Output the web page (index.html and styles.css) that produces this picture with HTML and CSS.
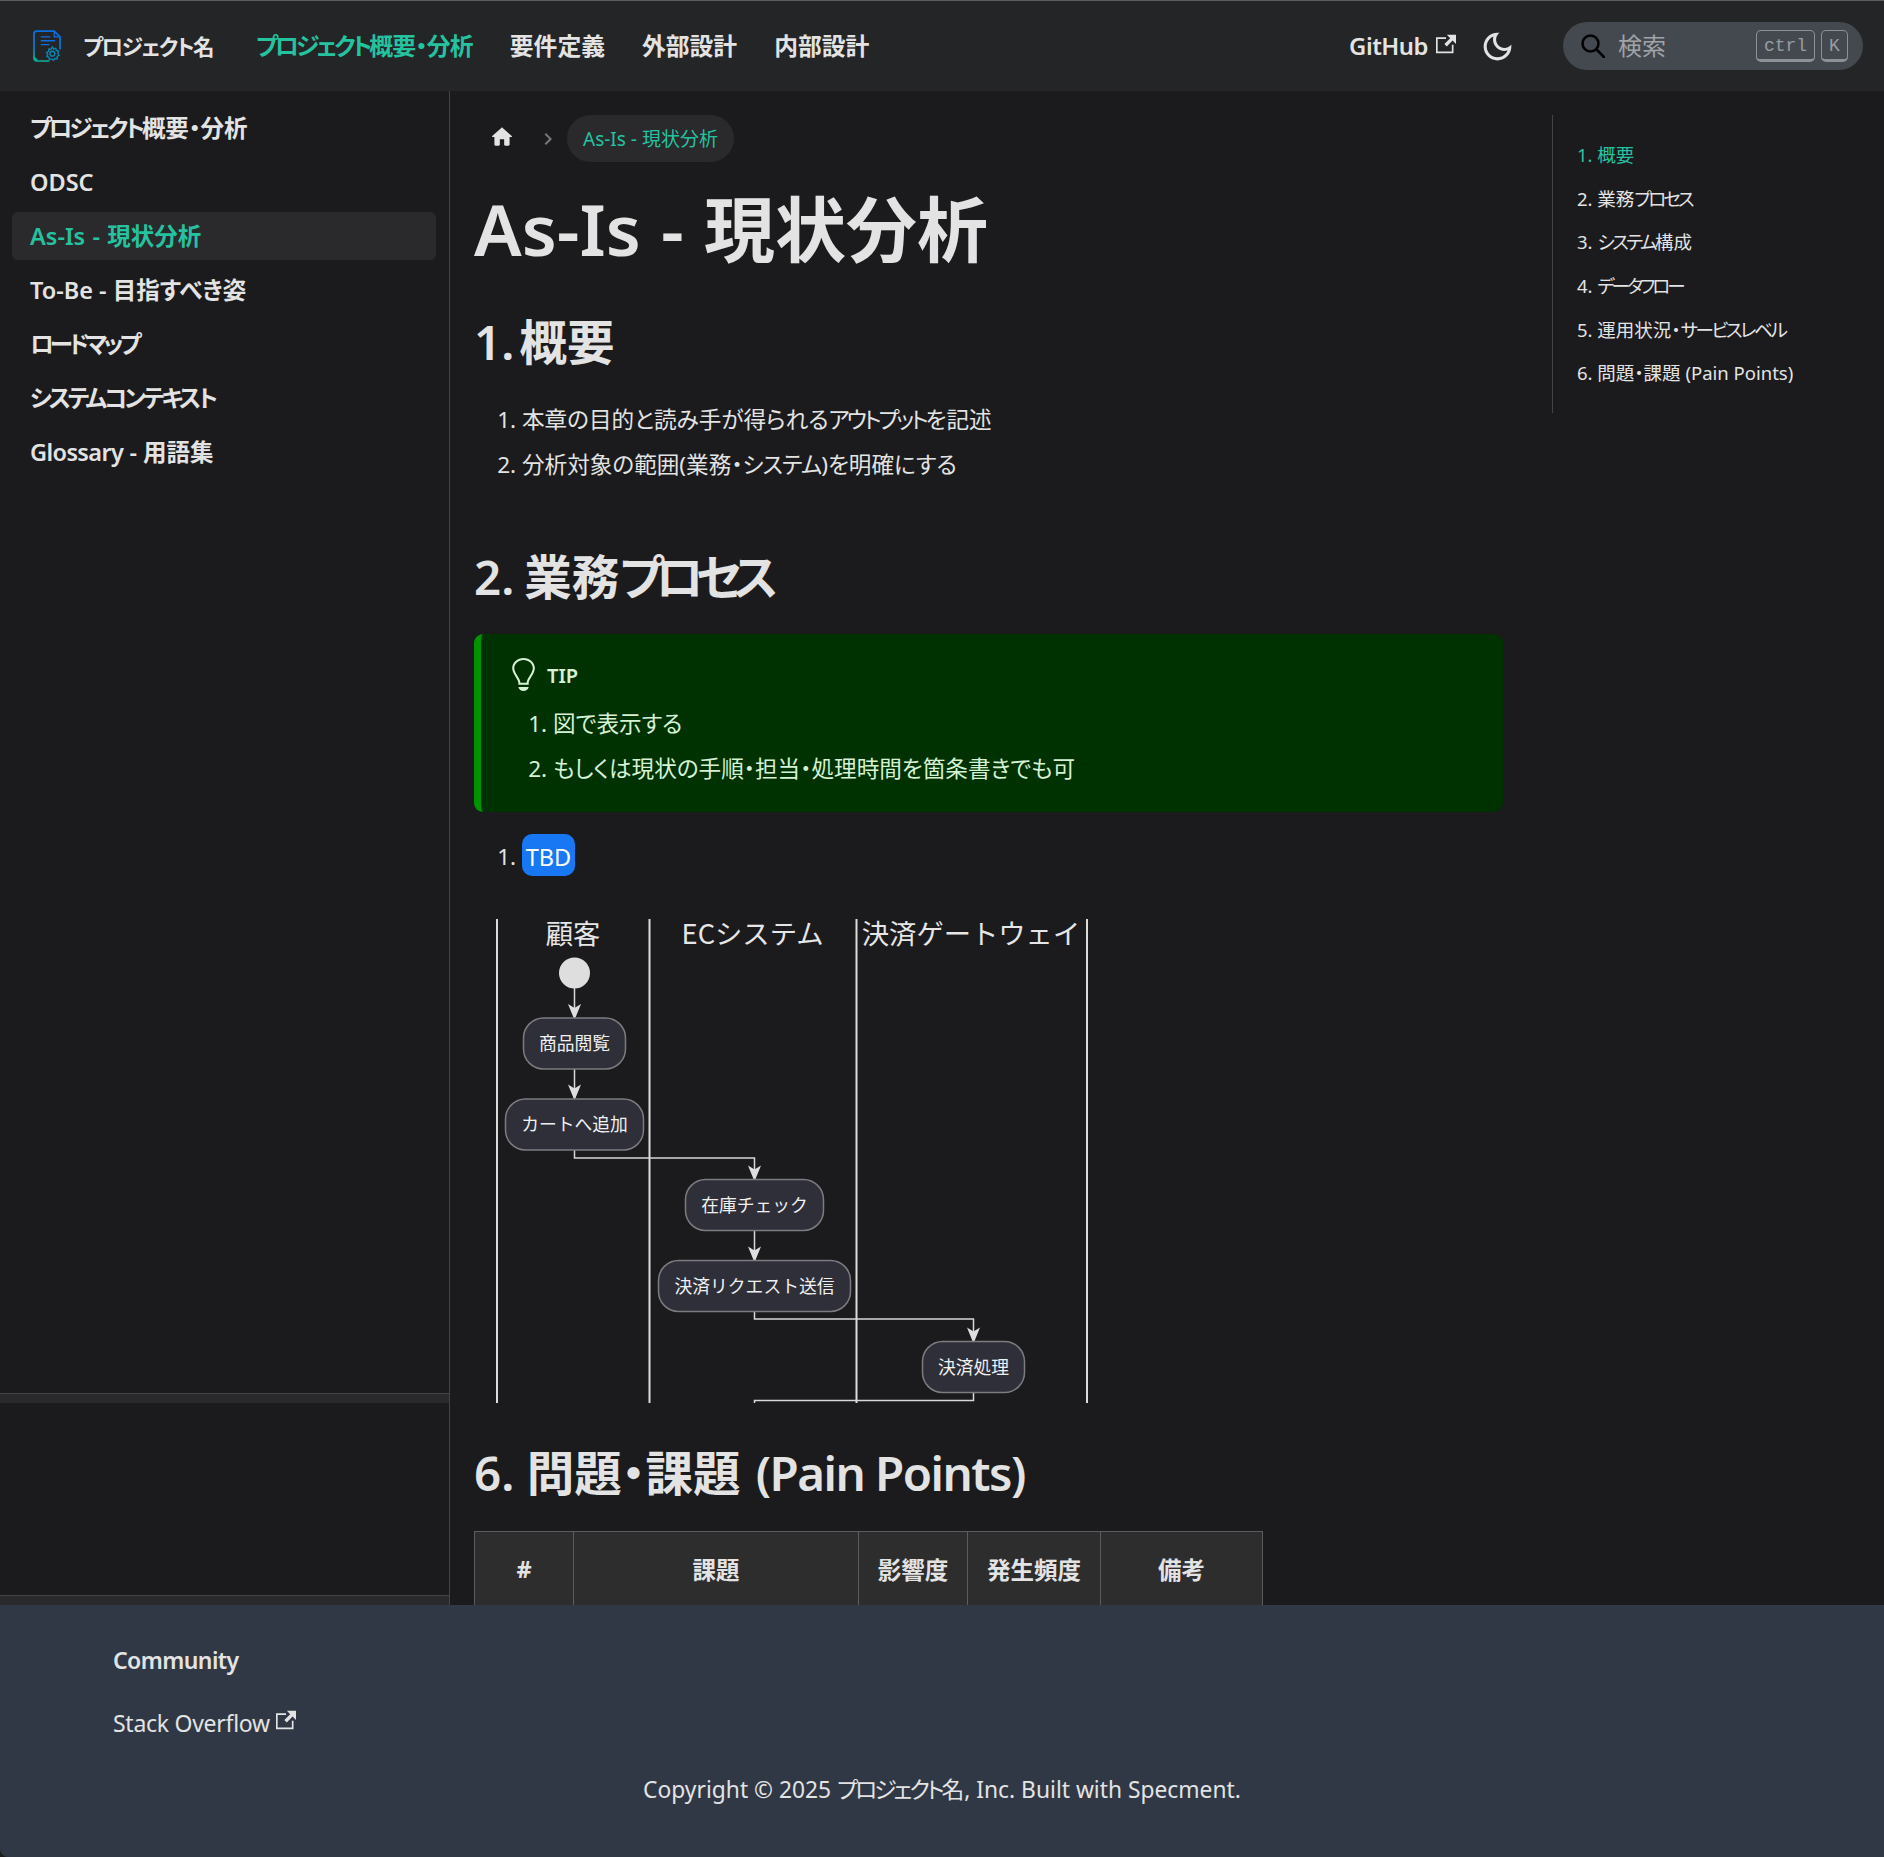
FILE: index.html
```html
<!DOCTYPE html>
<html lang="ja">
<head>
<meta charset="utf-8">
<title>As-Is - 現状分析</title>
<link rel="stylesheet" href="styles.css">
</head>
<body>
<div class="app">
  <header class="navbar">
    <a class="brand">
      <svg class="logo" viewBox="0 0 30 34" fill="none">
        <defs><linearGradient id="lg" x1="0" y1="0" x2="0" y2="1"><stop offset="0" stop-color="#0a6fe0"/><stop offset=".55" stop-color="#0a78c8"/><stop offset="1" stop-color="#0fb09a"/></linearGradient></defs>
        <path d="M17 32H4a3 3 0 0 1-3-3V4a3 3 0 0 1 3-3h18l6 6v13" stroke="url(#lg)" stroke-width="1.8"/>
        <path d="M1.500 27.500a3 3 0 0 0 3 3" stroke="#0fb09a" stroke-width="1.600"/>
        <path d="M22 1.500V7h6" stroke="#0a6fe0" stroke-width="1.400"/>
        <path d="M8 7h10M8 11h15M8 15h9" stroke="#0a6fe0" stroke-width="1.400"/>
        <path d="M20 17.500l1.300 2 2.300-.7.6 2.300 2.300.8-.8 2.200 1.400 1.900-2 1.200-.1 2.400-2.400-.2-1.400 1.900-1.900-1.400-2.300.7-.5-2.400-2.200-1 1-2.100-1.200-2 2.100-1.100.2-2.400 2.400.3z" stroke="#0a86b8" stroke-width="1.400" fill="#242526"/>
        <circle cx="20" cy="24.400" r="2.500" stroke="#0a86b8" stroke-width="1.400"/>
      </svg>
      <b class="brand-title"><span class="kb">プロジェクト</span>名</b>
    </a>
    <nav class="nav-links">
      <a class="nav-link is-active"><span class="kn">プロジェクト</span>概要・分析</a>
      <a class="nav-link">要件定義</a>
      <a class="nav-link">外部設計</a>
      <a class="nav-link">内部設計</a>
    </nav>
    <div class="nav-right">
      <a class="nav-link github">GitHub
        <svg class="ext" viewBox="0 0 24 24"><path fill="currentColor" d="M21 13v10h-21v-19h12v2h-10v15h17v-8h2zm3-12h-10.988l4.035 4-6.977 7.070 2.828 2.828 6.977-7.070 4.125 4.172v-11z"/></svg>
      </a>
      <svg class="moon" viewBox="0 0 24 24"><path fill="#e3e3e3" d="M9.370,5.510C9.190,6.150,9.100,6.820,9.100,7.500c0,4.080,3.320,7.400,7.400,7.400c0.680,0,1.350-0.090,1.990-0.270C17.450,17.190,14.930,19,12,19 c-3.860,0-7-3.140-7-7C5,9.070,6.810,6.550,9.370,5.510z M12,3c-4.970,0-9,4.030-9,9s4.030,9,9,9s9-4.030,9-9c0-0.460-0.040-0.920-0.100-1.360 c-0.980,1.370-2.580,2.260-4.400,2.260c-2.980,0-5.400-2.420-5.400-5.400c0-1.810,0.890-3.420,2.260-4.400C12.920,3.040,12.460,3,12,3L12,3z"/></svg>
      <div class="search">
        <svg class="search-icon" viewBox="0 0 24 24" fill="none" stroke="#000" stroke-width="2.600" stroke-linecap="round"><circle cx="9.500" cy="9.500" r="8"/><path d="M15.500 15.500L23 23"/></svg>
        <span class="search-text">検索</span>
        <kbd class="key key-ctrl">ctrl</kbd>
        <kbd class="key">K</kbd>
      </div>
    </div>
  </header>

  <div class="layout">
    <aside class="sidebar">
      <ul class="menu">
        <li class="menu-item"><span class="kn">プロジェクト</span>概要・分析</li>
        <li class="menu-item">ODSC</li>
        <li class="menu-item is-active">As-Is - 現状分析</li>
        <li class="menu-item">To-Be - 目指すべき姿</li>
        <li class="menu-item"><span class="kl">ロードマップ</span></li>
        <li class="menu-item"><span class="kn">システムコンテキスト</span></li>
        <li class="menu-item"><span class="lt">Glossary</span> - 用語集</li>
      </ul>
      <div class="side-bar"></div>
      <div class="side-panel"></div>
      <div class="side-bar"></div>
    </aside>

    <main class="doc">
      <div class="crumbs">
        <svg class="home" viewBox="0 0 24 24"><path fill="#e3e3e3" d="M10 19v-5h4v5c0 .55.45 1 1 1h3c.55 0 1-.45 1-1v-7h1.700c.46 0 .68-.57.33-.87L12.670 3.600c-.38-.34-.96-.34-1.340 0l-8.360 7.530c-.34.3-.13.87.33.87H5v7c0 .55.45 1 1 1h3c.55 0 1-.45 1-1z"/></svg>
        <svg class="chev" viewBox="0 0 24 24"><path fill="#777" d="M10 6 8.590 7.410 13.170 12l-4.580 4.590L10 18l6-6z"/></svg>
        <span class="crumb-pill">As-Is - 現状分析</span>
      </div>
      <h1 class="title">As-Is - 現状分析</h1>
      <h2 class="h2 h2-first">1. 概要</h2>
      <ol class="list list-first">
        <li>本章の目的と読み手が得られる<span class="kn">アウトプット</span>を記述</li>
        <li>分析対象の範囲(業務・<span class="ks">システム</span>)を明確にする</li>
      </ol>
      <h2 class="h2 h2-second">2. 業務<span class="kl">プロセス</span></h2>
      <div class="tip">
        <div class="tip-head">
          <svg class="bulb" viewBox="0 0 12 16"><path fill="#d5f2d5" d="M6.500 0C3.480 0 1 2.190 1 5c0 .92.55 2.250 1 3 1.340 2.250 1.780 2.780 2 4v1h5v-1c.22-1.220.66-1.750 2-4 .45-.75 1-2.080 1-3 0-2.810-2.480-5-5.500-5zm3.640 7.480c-.25.44-.47.8-.67 1.110-.86 1.410-1.250 2.060-1.450 3.230-.02.05-.02.11-.02.17H5c0-.06 0-.13-.02-.17-.2-1.170-.59-1.830-1.450-3.230-.2-.31-.42-.67-.67-1.110C2.440 6.780 2 5.650 2 5c0-2.200 2.020-4 4.500-4 1.220 0 2.360.42 3.220 1.190C10.550 2.940 11 3.940 11 5c0 .66-.44 1.780-.86 2.480zM4 14h5c-.23 1.140-1.300 2-2.500 2s-2.270-.86-2.500-2z"/></svg>
          <span class="tip-label">TIP</span>
        </div>
        <ol class="list tip-list">
          <li>図で表示する</li>
          <li>もしくは現状の手順・担当・処理時間を箇条書きでも可</li>
        </ol>
      </div>
      <ol class="list list-tbd">
        <li><span class="badge">TBD</span></li>
      </ol>
      <svg class="diagram" viewBox="474 905 640 498" width="640" height="498">
        <g class="lanes">
          <path d="M497 919V1403M649.500 919V1403M856.500 919V1403M1087 919V1403"/>
        </g>
        <text class="lane-title" x="573" y="944">顧客</text>
        <text class="lane-title" x="752.500" y="944">ECシステム</text>
        <text class="lane-title" x="971" y="944">決済ゲートウェイ</text>
        <circle class="start" cx="574.500" cy="973" r="15.500"/>
        <g class="edges">
          <path d="M574.500 988V1017"/>
          <path d="M574.500 1069V1098"/>
          <path d="M574.500 1150V1158H754.500V1179"/>
          <path d="M754.500 1231V1260"/>
          <path d="M754.500 1312V1319H973.500V1341"/>
          <path d="M973.500 1393V1400.500H754.500V1403"/>
        </g>
        <g class="heads">
          <path d="M574.500 1020l-6.500-16 6.500 4 6.500-4z"/>
          <path d="M574.500 1100.500l-6.500-16 6.500 4 6.500-4z"/>
          <path d="M754.500 1181.500l-6.500-16 6.500 4 6.500-4z"/>
          <path d="M754.500 1262.500l-6.500-16 6.500 4 6.500-4z"/>
          <path d="M973.500 1343.500l-6.500-16 6.500 4 6.500-4z"/>
        </g>
        <g class="nodes">
          <rect x="523.500" y="1018" width="102" height="51" rx="20"/>
          <rect x="505.500" y="1099" width="138" height="51" rx="20"/>
          <rect x="685.500" y="1179.500" width="138" height="51" rx="20"/>
          <rect x="658.500" y="1260.500" width="192" height="51" rx="20"/>
          <rect x="922.500" y="1341.500" width="102" height="51" rx="20"/>
        </g>
        <g class="node-text">
          <text x="574.500" y="1050">商品閲覧</text>
          <text x="574.500" y="1131">カートへ追加</text>
          <text x="754.500" y="1211.500">在庫チェック</text>
          <text x="754.500" y="1292.500">決済リクエスト送信</text>
          <text x="973.500" y="1373.500">決済処理</text>
        </g>
      </svg>
      <h2 class="h2 h2-third">6. 問題・課題 <span class="lp">(Pain Points)</span></h2>
      <table class="table">
        <thead>
          <tr><th class="c1">#</th><th class="c2">課題</th><th class="c3">影響度</th><th class="c4">発生頻度</th><th class="c5">備考</th></tr>
        </thead>
      </table>
    </main>

    <nav class="toc">
      <ul class="toc-list">
        <li class="is-active">1. 概要</li>
        <li>2. 業務<span class="kl">プロセス</span></li>
        <li>3. <span class="kn">システム</span>構成</li>
        <li>4. <span class="kl">データフロー</span></li>
        <li>5. 運用状況・<span class="kn">サービスレベル</span></li>
        <li>6. 問題・課題 (Pain Points)</li>
      </ul>
    </nav>
  </div>

  <footer class="footer">
    <div class="foot-title">Community</div>
    <a class="foot-link">Stack Overflow
      <svg class="ext ext-foot" viewBox="0 0 24 24"><path fill="currentColor" d="M21 13v10h-21v-19h12v2h-10v15h17v-8h2zm3-12h-10.988l4.035 4-6.977 7.070 2.828 2.828 6.977-7.070 4.125 4.172v-11z"/></svg>
    </a>
    <div class="copyright">Copyright © 2025 <span class="kn">プロジェクト</span>名, Inc. Built with Specment.</div>
  </footer>
</div>
</body>
</html>
```
FILE: styles.css
```css
* { box-sizing: border-box; }
html, body { margin: 0; padding: 0; background: #1b1b1d; }
body {
  font-family: "Noto Sans", "Noto Sans CJK JP", sans-serif;
  font-feature-settings: "palt";
  color: #e3e3e3;
  font-size: 22px;
}
.app { height: 1857px; display: flex; flex-direction: column; overflow: hidden; }
.kn { letter-spacing: -.13em; }
.kb { letter-spacing: -.07em; }
.kl { letter-spacing: -.165em; }
.ks { letter-spacing: -.04em; }
.lt { letter-spacing: -.026em; }
.lp { letter-spacing: -.032em; margin-left: 3px; }

/* navbar */
.navbar {
  height: 91px; flex: none; display: flex; align-items: center;
  background: #242526; border-top: 1px solid #5c5c5c; padding: 0 21px 0 33px;
}
.brand { display: flex; align-items: center; }
.logo { width: 29px; height: 33px; margin-right: 21px; }
.brand-title { font-size: 21.500px; font-weight: 600; width: 173px; margin-top: -2px; }
.nav-links { display: flex; gap: 37px; }
.nav-link { font-size: 23.800px; font-weight: 600; color: #e3e3e3; line-height: 32px; white-space: nowrap; }
.nav-link.is-active { color: #25c2a0; letter-spacing: -.03em; }
.nav-right { margin-left: auto; display: flex; align-items: center; }
.github { display: flex; align-items: center; gap: 8px; letter-spacing: -.02em; }
.ext { width: 20px; height: 20px; margin-top: -5px; }
.moon { width: 37px; height: 37px; margin-left: 23px; margin-right: 47px; }
.search {
  width: 300px; height: 48px; border-radius: 24px; background: #444950;
  display: flex; align-items: center; padding: 0 15px 0 18px;
}
.search-icon { width: 24px; height: 24px; flex: none; }
.search-text { font-size: 24px; color: #a0a3a8; margin-left: 13px; margin-right: auto; margin-top: -3px; }
.key {
  height: 32px; border: 1px solid #8d9096; border-bottom-width: 3px; border-radius: 5px;
  font-family: "Liberation Mono", monospace; font-size: 18px; color: #999ca1;
  display: flex; align-items: center; justify-content: center; width: 27px; padding-top: 2px;
}
.key-ctrl { width: 59px; margin-right: 6px; }

/* layout */
.layout { flex: 1; min-height: 0; display: flex; overflow: hidden; }
.sidebar { width: 450px; flex: none; border-right: 1px solid #444; display: flex; flex-direction: column; }
.menu { list-style: none; margin: 0; padding: 13px 13px 0 12px; flex: 1; }
.menu-item {
  height: 48px; line-height: 48px; padding-left: 18px; margin-bottom: 6px;
  font-size: 23.500px; font-weight: 600; border-radius: 6px;
}
.menu-item.is-active { background: #2a2a2c; color: #25c2a0; word-spacing: .05em; }
.side-bar { height: 10px; flex: none; background: #2a2a2c; border-top: 1px solid #444; }
.side-panel { height: 192px; flex: none; }

/* doc */
.doc { width: 1102px; flex: none; padding: 24px 49px 0 24px; overflow: hidden; }
.crumbs { display: flex; align-items: center; height: 47px; }
.home { width: 26px; height: 26px; margin-left: 15px; margin-top: -4px; flex: none; }
.chev { width: 24px; height: 24px; margin-left: 21px; margin-right: 7px; flex: none; }
.crumb-pill {
  height: 47px; line-height: 49px; padding: 0 16px; border-radius: 24px; background: #2a2a2c;
  color: #25c2a0; font-size: 19px;
}
.title { font-size: 71px; line-height: 84px; font-weight: 600; margin: 25px 0 0; word-spacing: .025em; }
.h2 { font-size: 47.500px; line-height: 56px; font-weight: 600; margin: 0; }
.h2-first { margin-top: 43px; word-spacing: -.15em; }
.h2-second { margin-top: 62px; word-spacing: -.05em; }
.h2-third { margin-top: 42px; }
.list { margin: 0; padding: 0 0 0 48px; }
.list li { line-height: 45px; font-size: 22.600px; }
.list-first { margin-top: 27px; }
.tip {
  margin-top: 29px; height: 178px; background: #003100; border-left: 7px solid #009400;
  border-radius: 9px; padding: 24px 0 0 29px; color: #d5f2d5;
}
.tip-head { display: flex; align-items: center; height: 33px; }
.bulb { width: 25px; height: 33px; }
.tip-label { font-size: 20px; font-weight: 600; margin-left: 12px; margin-top: 2px; }
.tip .tip-list { margin-top: 10px; padding-left: 43px; }
.list-tbd { margin-top: 22px; }
.list-tbd li { line-height: 46px; height: 42px; }
.badge {
  display: inline-block; height: 42px; line-height: 46px; width: 53px; text-align: center;
  background: #1877f2; color: #fff; border-radius: 10px; font-size: 23.500px; vertical-align: top;
}
.diagram { display: block; margin-top: 29px; overflow: hidden; font-family: "Noto Sans CJK JP", sans-serif; font-feature-settings: normal; }
.lanes path { stroke: #dcdcdc; stroke-width: 2; fill: none; }
.lane-title { font-size: 27.300px; fill: #e6e6e6; text-anchor: middle; }
.start { fill: #dedede; }
.edges path { stroke: #d8d8d8; stroke-width: 1.500; fill: none; }
.heads path { fill: #dedede; }
.nodes rect { fill: #2f2f39; stroke: #7c7c80; stroke-width: 1.500; }
.node-text text { font-size: 17.800px; fill: #f0f0f0; text-anchor: middle; }
.table { border-collapse: collapse; margin-top: 30px; table-layout: fixed; width: 788px; }
.table th {
  height: 78px; background: #2d2d2e; border: 1.500px solid #5c5c60; font-size: 23.500px; font-weight: 700; padding: 0 0 4px;
}
.c1 { width: 99px; } .c2 { width: 285px; } .c3 { width: 109px; } .c4 { width: 133px; } .c5 { width: 162px; }

/* toc */
.toc { flex: none; width: 332px; padding-top: 24px; }
.toc-list {
  list-style: none; margin: 0; height: 298px; border-left: 1px solid #444;
  padding: 18px 0 0 24px; font-size: 18.500px;
}
.toc-list li { height: 43.700px; line-height: 43.700px; white-space: nowrap; }
.toc-list .is-active { color: #25c2a0; letter-spacing: 0; }

/* footer */
.footer {
  height: 252px; flex: none; background: #303846; position: relative;
  padding: 36px 0 0 113px; border-bottom-left-radius: 8px;
}
.foot-title { font-size: 23px; font-weight: 600; line-height: 38px; letter-spacing: -.025em; }
.foot-link { display: flex; align-items: center; gap: 6px; margin-top: 25px; font-size: 23px; line-height: 38px; letter-spacing: -.012em; }
.ext-foot { width: 20px; height: 20px; margin-top: -6px; }
.copyright { margin-top: 29px; margin-left: -113px; text-align: center; font-size: 22.800px; line-height: 38px; }
```
